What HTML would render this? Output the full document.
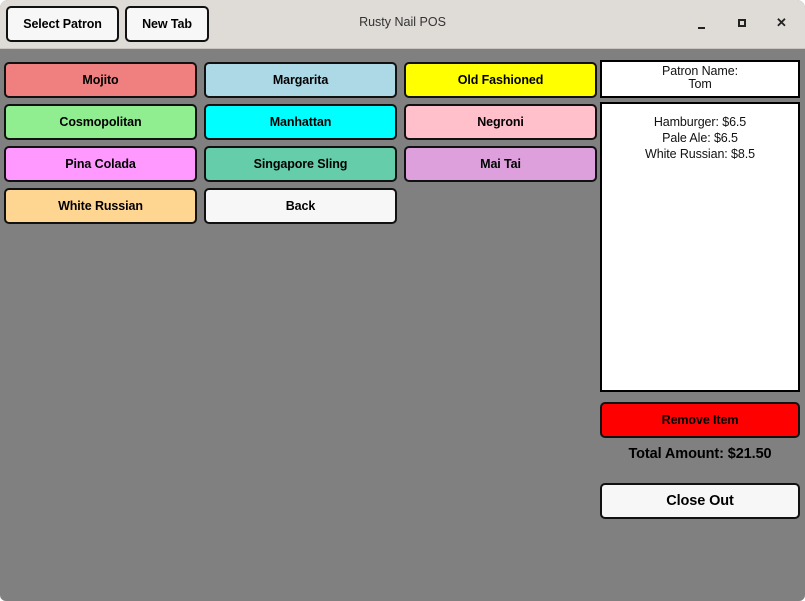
<html><head><style>
body{margin:0;width:805px;height:601px;background:#fff;font-family:"Liberation Sans",sans-serif;overflow:hidden}
.win{position:absolute;left:0;top:0;width:805px;height:601px;background:#808080;border-radius:8px 8px 6px 6px;overflow:hidden}
.tb{position:absolute;left:0;top:0;width:805px;height:48px;background:#dfdbd7;border-bottom:1px solid #c8c4c0}
.b{position:absolute;box-sizing:border-box;border:2px solid #111;border-radius:5px;display:flex;align-items:center;justify-content:center;font-weight:bold;font-size:12.5px;letter-spacing:-0.1px;color:#000;padding-bottom:1px}
.title{position:absolute;left:0;width:805px;top:15px;text-align:center;font-size:12.5px;color:#333}
.d{position:absolute;box-sizing:border-box;border:2px solid #000;background:#fff;text-align:center;font-size:12.5px;letter-spacing:-0.1px;color:#111}
</style></head><body><div class="win">
<div class="tb">
<div class="b" style="left:6px;top:6px;width:113px;height:36px;background:#f7f7f7">Select Patron</div>
<div class="b" style="left:125px;top:6px;width:84px;height:36px;background:#f7f7f7">New Tab</div>
<div class="title">Rusty Nail POS</div>
<div style="position:absolute;left:698px;top:27px;width:7px;height:2px;background:#222"></div>
<div style="position:absolute;left:738px;top:19px;width:4px;height:4px;border:2px solid #222"></div>
<div style="position:absolute;left:776px;top:15px;font-size:13px;font-weight:bold;color:#222">✕</div>
</div>
<div class="b" style="left:4px;top:62px;width:193px;height:36px;background:#f08080">Mojito</div>
<div class="b" style="left:204px;top:62px;width:193px;height:36px;background:#add8e6">Margarita</div>
<div class="b" style="left:404px;top:62px;width:193px;height:36px;background:#ffff00">Old Fashioned</div>
<div class="b" style="left:4px;top:104px;width:193px;height:36px;background:#90ee90">Cosmopolitan</div>
<div class="b" style="left:204px;top:104px;width:193px;height:36px;background:#00ffff">Manhattan</div>
<div class="b" style="left:404px;top:104px;width:193px;height:36px;background:#ffc0cb">Negroni</div>
<div class="b" style="left:4px;top:146px;width:193px;height:36px;background:#ff99ff">Pina Colada</div>
<div class="b" style="left:204px;top:146px;width:193px;height:36px;background:#66cdaa">Singapore Sling</div>
<div class="b" style="left:404px;top:146px;width:193px;height:36px;background:#dda0dd">Mai Tai</div>
<div class="b" style="left:4px;top:188px;width:193px;height:36px;background:#ffd592">White Russian</div>
<div class="b" style="left:204px;top:188px;width:193px;height:36px;background:#f7f7f7">Back</div>
<div class="d" style="left:600px;top:60px;width:200px;height:38px;padding-top:3px;line-height:13px">Patron Name:<br>Tom</div>
<div class="d" style="left:600px;top:102px;width:200px;height:290px;padding-top:10px;line-height:16px">Hamburger: $6.5<br>Pale Ale: $6.5<br>White Russian: $8.5</div>
<div class="b" style="left:600px;top:402px;width:200px;height:36px;background:#ff0000">Remove Item</div>
<div style="position:absolute;left:600px;width:200px;top:446px;text-align:center;font-weight:bold;font-size:14.5px;letter-spacing:-0.1px;color:#000">Total Amount: $21.50</div>
<div class="b" style="left:600px;top:483px;width:200px;height:36px;background:#f7f7f7;font-size:14.5px">Close Out</div>
</div></body></html>
